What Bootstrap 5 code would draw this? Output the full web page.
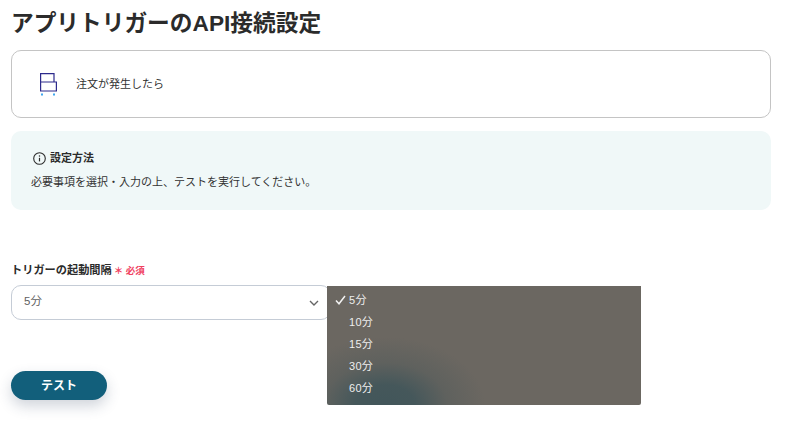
<!DOCTYPE html>
<html lang="ja">
<head>
<meta charset="utf-8">
<title>アプリトリガーのAPI接続設定</title>
<link href="https://cdn.jsdelivr.net/npm/bootstrap@5.3.0/dist/css/bootstrap.min.css" rel="stylesheet">
<style>
html,body{height:100%;overflow:hidden}
body{font-family:"Liberation Sans","Noto Sans CJK JP",sans-serif;color:#333;background:#fff}
.pg{width:760px;margin-left:11px;position:relative}
.ttl{font-size:22.7px;font-weight:700;line-height:30px;margin:8px 0 12px;color:#2b2b2b;white-space:nowrap}
.appbox{height:68px;border:1px solid #c4c4c4;border-radius:10px;padding-left:28px;gap:19px;font-size:11px;margin-bottom:13px}
.appbox svg{display:block}
.infobox{height:79px;background:#f0f8f8;border-radius:10px;padding:19px 20px 0 20px;margin-bottom:53px}
.infohead{font-size:11px;font-weight:700;line-height:16px;gap:3px;padding-left:1px;margin-bottom:8px;color:#2b2b2b}
.infotxt{font-size:11px;line-height:16px}
.lbl{font-size:11.2px;font-weight:700;line-height:14px;margin-bottom:7px;color:#2b2b2b}
.req{color:#f0415f;font-size:9.5px;margin-left:2px}
.fakeselect{width:320px;height:35px;border:1px solid #c5ccd6;border-radius:10px;padding:0 11px 2px 12px;font-size:11.5px;color:#5f5f5f;background:#fff}
.fakeselect svg{margin-top:2px}
.testbtn{width:96px;height:29px;border-radius:15px;background:#125f7b;color:#fff;font-size:12px;font-weight:700;border:0;padding:0;margin-top:51px;box-shadow:0 6px 14px rgba(40,60,90,.22)}
.testbtn:hover{background:#125f7b;color:#fff}
.picker{position:absolute;left:316px;top:278px;width:314px;height:119px;padding:3px 0 0;background:radial-gradient(ellipse 100px 68px at 58px 119px,#42565a 0%,rgba(66,86,90,.92) 30%,rgba(80,90,90,.45) 62%,rgba(107,103,97,0) 100%),#6b6761;color:#eee;font-size:11px;letter-spacing:.3px;z-index:5;list-style:none;margin:0;border-radius:0 0 2px 2px}
.picker li{height:22px;line-height:22px;padding-left:22px;position:relative}
.picker svg{position:absolute;left:8px;top:6px}
</style>
</head>
<body>
<div class="pg">
  <h1 class="ttl">アプリトリガーのAPI接続設定</h1>
  <div class="appbox d-flex align-items-center">
    <svg width="17" height="23" viewBox="0 0 17 23" fill="none">
      <path d="M.6.6H14V9H16.4V18H.6Z M.6 9H14" stroke="#2d2a8c" stroke-width="1.2"/>
      <rect x="1" y="20.5" width="2" height="2" fill="#3ea6ee"/>
      <rect x="13" y="20.5" width="2" height="2" fill="#3ea6ee"/>
    </svg>
    <span>注文が発生したら</span>
  </div>
  <div class="infobox">
    <div class="infohead d-flex align-items-center">
      <svg width="15" height="15" viewBox="0 0 15 15" fill="none">
        <circle cx="7.5" cy="7.5" r="5.8" stroke="#2b2b2b" stroke-width="1.1"/>
        <path d="M7.5 6.8V10.4" stroke="#2b2b2b" stroke-width="1.2"/>
        <circle cx="7.5" cy="4.9" r=".75" fill="#2b2b2b"/>
      </svg>
      <span>設定方法</span>
    </div>
    <div class="infotxt">必要事項を選択・入力の上、テストを実行してください。</div>
  </div>
  <div class="lbl">トリガーの起動間隔<span class="req">＊ 必須</span></div>
  <div class="fakeselect d-flex align-items-center justify-content-between">
    <span>5分</span>
    <svg width="10" height="6" viewBox="0 0 10 6" fill="none"><path d="M1 1L5 5L9 1" stroke="#666" stroke-width="1.4"/></svg>
  </div>
  <button type="button" class="btn testbtn d-block">テスト</button>
  <ul class="picker">
    <li><svg width="11" height="10" viewBox="0 0 11 10" fill="none"><path d="M1 5.5L4 8.8L10 1" stroke="#f2f2f2" stroke-width="1.5"/></svg>5分</li>
    <li>10分</li>
    <li>15分</li>
    <li>30分</li>
    <li>60分</li>
  </ul>
</div>
<script src="https://cdn.jsdelivr.net/npm/bootstrap@5.3.0/dist/js/bootstrap.bundle.min.js"></script>
</body>
</html>
